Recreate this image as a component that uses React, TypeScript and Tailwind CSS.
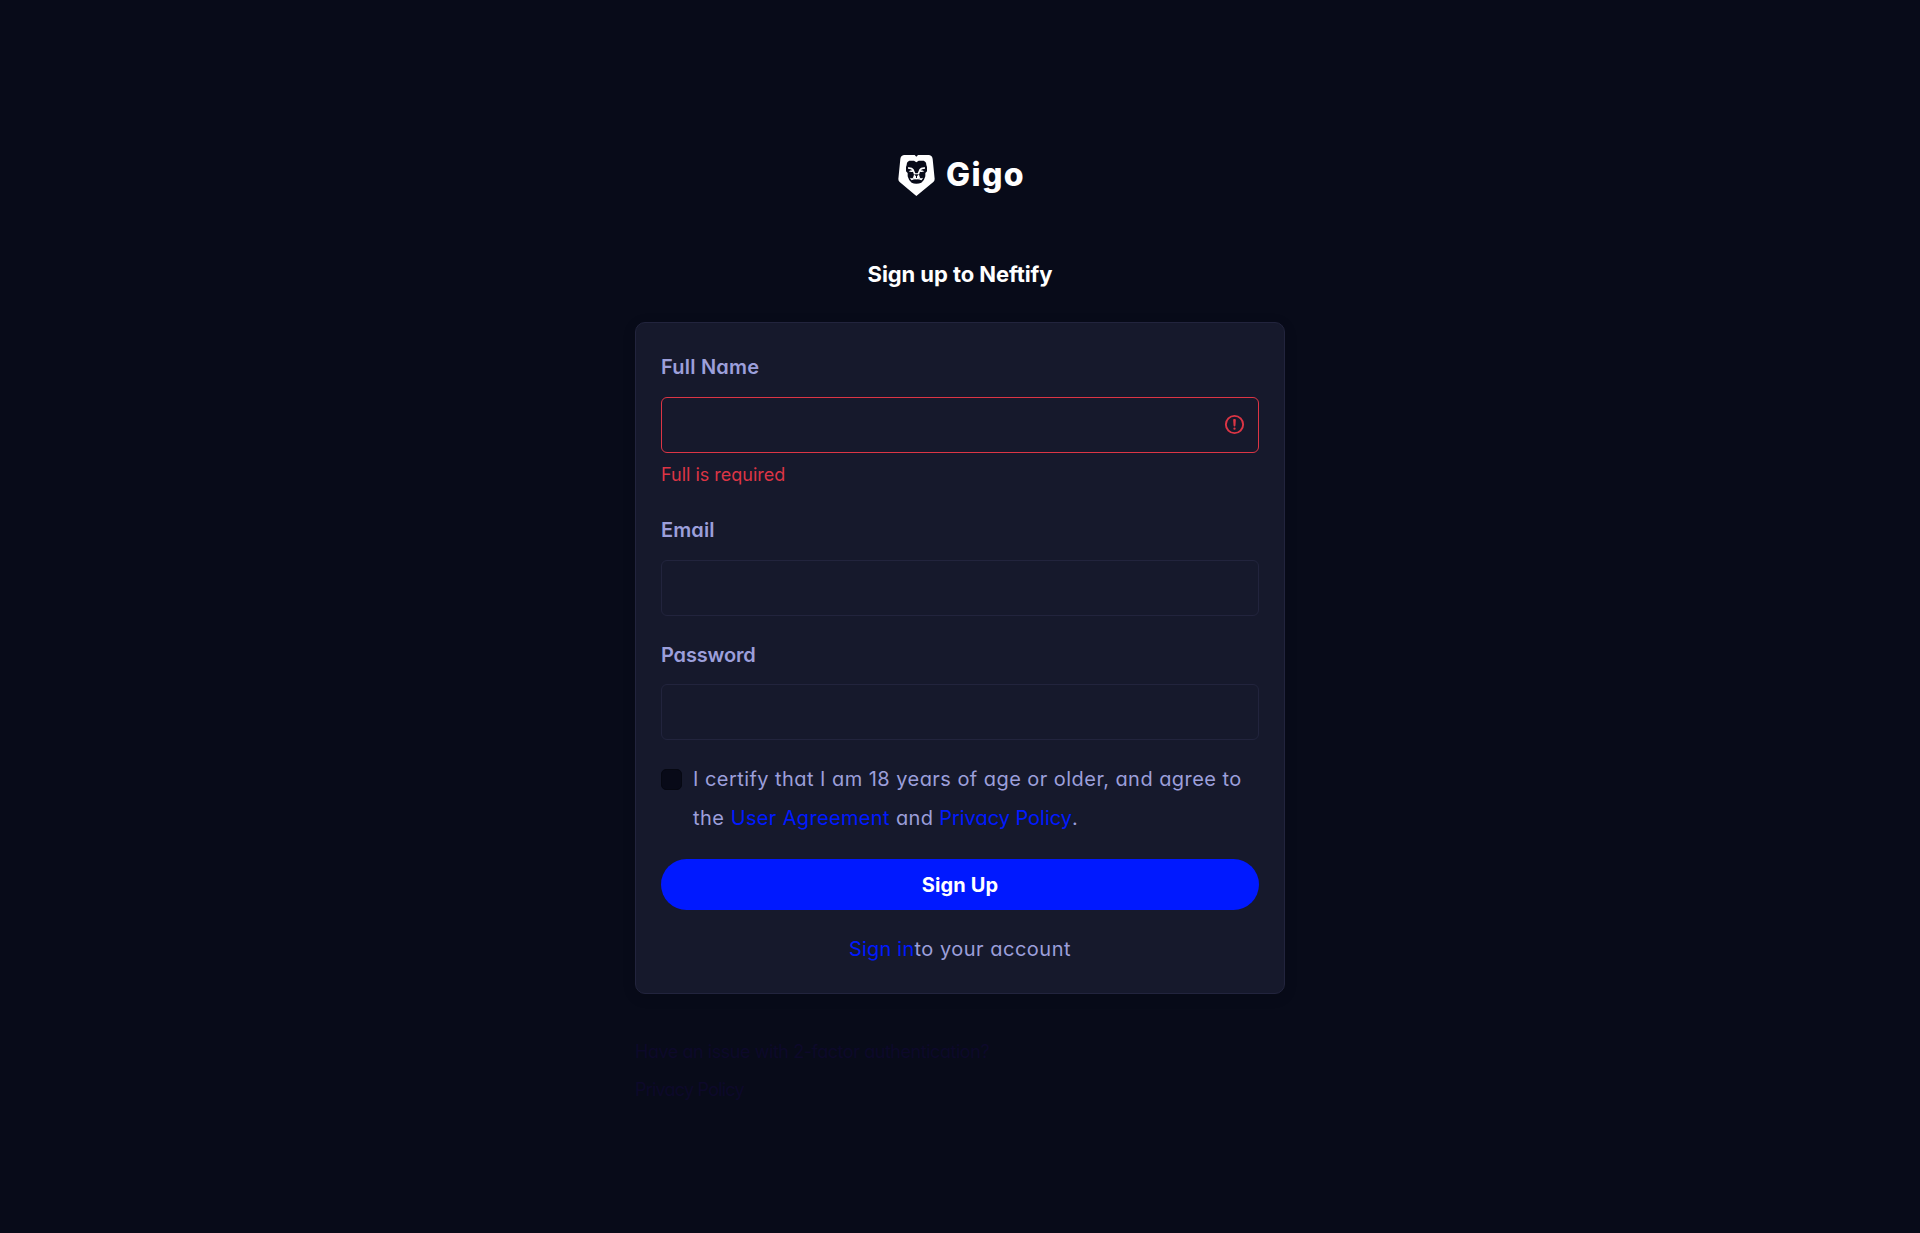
import type { ReactNode } from "react";

function Logo() {
  return (
    <div className="ml-[2px] flex h-[41px] w-[126px] items-start text-white">
      <svg className="h-[41px] w-[37px] shrink-0" viewBox="0 0 109 123">
        <path
          fill="#fff"
          d="M17 0H49L54 5L59 0H92Q102 2 103 12L109 72Q109 78 105 81L54 123L4 81Q0 78 0 72L6 12Q7 2 17 0Z"
        />
        <path
          fill="#080a18"
          d="M33 17H47L54 22L61 17H76Q84 20 84 30L86 36V49L81 54V64Q78 77 69 83Q62 86 54 86Q46 86 40 83Q31 77 28 64V54L23 49V36L25 30Q25 20 33 17Z"
        />
        <path fill="#fff" d="M29 37Q42 36 46 43L51 55H58L63 43Q67 36 80 37V41Q70 41 67 46Q73 46 78 49Q70 53 65 50L62 59L65 68L71 72L64 71L54 73L45 71L38 72L44 68L47 59L44 50Q39 53 31 49Q36 46 42 46Q39 41 29 41Z" />
        <path fill="#080a18" d="M47 58H62L56 64V69H53V64Z" />
        <path fill="#fff" d="M35 68L43 71H66L74 68Q72 73 69 76Q62 72 54 73Q46 72 40 76Q37 73 35 68Z" />
      </svg>
      <span className="ml-[11px] mt-[2px] text-[32px] leading-[36px] font-extrabold tracking-[1.4px]">Gigo</span>
    </div>
  );
}

function Label({ children, className }: { children: ReactNode; className: string }) {
  return (
    <label className={`block text-[20px] leading-[30px] font-semibold text-[#9c9fdb] ${className}`}>
      {children}
    </label>
  );
}

function InvalidIcon() {
  return (
    <svg className="mb-[2px] size-[23px]" viewBox="0 0 12 12" fill="none" stroke="#dc3545">
      <circle cx="6" cy="6" r="4.5" />
      <path strokeLinejoin="round" d="M5.8 3.6h.4L6 6.5z" />
      <circle cx="6" cy="8.2" r=".6" fill="#dc3545" stroke="none" />
    </svg>
  );
}

export default function App() {
  return (
    <div className="flex min-h-[1233px] flex-col items-center bg-[#080b19] pt-[155px] font-['Inter',sans-serif] [font-feature-settings:'cv11']">
      <Logo />
      <h1 className="mt-[62px] text-[22px] leading-[32px] font-bold tracking-[-0.08px] text-white">Sign up to Neftify</h1>

      <form className="mt-[32px] w-[650px] rounded-[10px] border border-[#22243d] bg-[#16192c] px-[25px] pt-[29px] pb-[25px] shadow-[0_3px_14px_rgba(0,0,0,0.12)]">
        <Label className="tracking-[0.22px]">Full Name</Label>
        <div className="mt-[15px] flex h-[56px] items-center justify-end rounded-[6px] border border-[#dc3545] pr-[12px]">
          <InvalidIcon />
        </div>
        <p className="mt-[8px] text-[18px] leading-[27px] text-[#dc3545]">Full is required</p>

        <Label className="mt-[27px] tracking-[0.1px]">Email</Label>
        <div className="mt-[15px] h-[56px] rounded-[6px] border border-[#22243d]" />

        <Label className="mt-[24px] tracking-[-0.15px]">Password</Label>
        <div className="mt-[14px] h-[56px] rounded-[6px] border border-[#22243d]" />

        <div className="mt-[20px] flex text-[20px] leading-[39px] text-[#9c9fdb]">
          <span className="mt-[9px] size-[21px] shrink-0 rounded-[5px] border border-[#060812] bg-[#080a18]" />
          <div className="ml-[11px] whitespace-nowrap">
            <div className="tracking-[0.45px]">I certify that I am 18 years of age or older, and agree to</div>
            <div>
              <span className="tracking-[0.5px]">the </span>
              <a className="tracking-[0.35px] text-[#0019ff]">User Agreement</a>
              <span className="tracking-[0.35px]"> and </span>
              <a className="tracking-[-0.03px] text-[#0019ff]">Privacy Policy</a>.
            </div>
          </div>
        </div>

        <button
          type="button"
          className="mt-[21px] flex h-[51px] w-full items-center justify-center rounded-full bg-[#0019ff] text-[20px] font-bold tracking-[0.15px] text-white"
        >
          Sign Up
        </button>

        <p className="mt-[20px] -mb-px text-center text-[20px] leading-[39px] text-[#9c9fdb]">
          <a className="tracking-[0.2px] text-[#0019ff]">Sign in</a>
          <span className="tracking-[0.5px]">to your account</span>
        </p>
      </form>

      <div className="mt-[39px] flex w-[650px] flex-col text-[18px] leading-[38px] text-[#0d092a]">
        <a className="tracking-[-0.45px]">Have an issue with 2-factor authentication?</a>
        <a className="tracking-[-0.78px]">Privacy Policy</a>
      </div>
    </div>
  );
}
